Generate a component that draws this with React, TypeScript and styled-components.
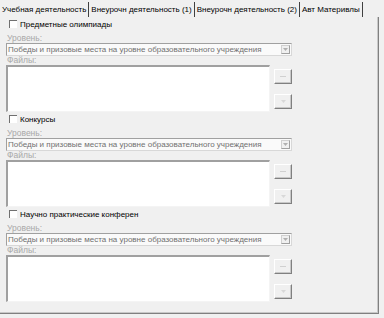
import React from 'react';
import styled, { createGlobalStyle } from 'styled-components';

const GlobalStyle = createGlobalStyle`
    html, body {
        margin: 0;
        padding: 0;
        background: #f0f0f0;
    }
`;

const Window = styled.div`
    width: 384px;
    height: 318px;
    background: #f0f0f0;
    font-family: 'Liberation Sans', Arial, sans-serif;
    color: #000;
    overflow: hidden;
`;

const TabBar = styled.div`
    display: flex;
    align-items: flex-end;
    height: 17px;
    padding-left: 2px;
`;

const Tab = styled.div<{ $active?: boolean }>`
    display: flex;
    align-items: center;
    height: 15px;
    padding: 0 2px 0 ${(p) => (p.$active ? 0 : 2)}px;
    border-right: 1px solid #404040;
    font-size: 8px;
    white-space: nowrap;
`;

const Panel = styled.div`
    width: 379px;
    height: 297px;
    border-right: 1px solid #808080;
    border-bottom: 1px solid #808080;
    box-shadow: inset -1px -1px 0 #c8c8c8;
    box-sizing: border-box;
    padding-left: 6px;
`;

const Section = styled.div`
    height: 95px;
    display: flex;
    flex-direction: column;
`;

const CheckRow = styled.label`
    display: flex;
    align-items: center;
    gap: 3px;
    height: 14px;
    padding-left: 3px;
    font-size: 8px;
`;

const CheckBox = styled.span`
    width: 7px;
    height: 7px;
    background: #fff;
    border-top: 1px solid #707070;
    border-left: 1px solid #707070;
`;

const FieldLabel = styled.div<{ $h: number }>`
    height: ${(p) => p.$h}px;
    display: flex;
    align-items: flex-end;
    font-size: 8.5px;
    line-height: 9px;
    color: #a8a8a8;
    padding-left: 1px;
`;

const Combo = styled.div`
    width: 286px;
    height: 13px;
    box-sizing: border-box;
    display: flex;
    align-items: center;
    background: #fafafa;
    border: 1px solid #a0a0a0;
    border-right-color: #d8d8d8;
    border-bottom-color: #d8d8d8;
`;

const ComboText = styled.span`
    flex: 1;
    padding-left: 1px;
    font-size: 8px;
    color: #707070;
    white-space: nowrap;
    overflow: hidden;
`;

const ComboArrow = styled.span`
    width: 9px;
    height: 9px;
    margin-right: 1px;
    display: flex;
    align-items: center;
    justify-content: center;
    border: 1px solid #d0d0d0;
    border-right-color: #a0a0a0;
    border-bottom-color: #a0a0a0;
    box-sizing: border-box;
    background: #f0f0f0;
`;

const FilesRow = styled.div`
    display: flex;
    gap: 4px;
`;

const FileList = styled.div`
    width: 264px;
    height: 47px;
    box-sizing: border-box;
    background: #fff;
    border-top: 2px solid #a0a0a0;
    border-left: 2px solid #a0a0a0;
    border-right: 1px solid #f4f4f4;
    border-bottom: 1px solid #f4f4f4;
`;

const ButtonColumn = styled.div`
    display: flex;
    flex-direction: column;
    gap: 10px;
    padding-top: 4px;
`;

const SmallButton = styled.div`
    width: 18px;
    height: 15px;
    box-sizing: border-box;
    display: flex;
    align-items: center;
    justify-content: center;
    background: #f0f0f0;
    border-top: 1px solid #ffffff;
    border-left: 1px solid #ffffff;
    border-right: 1px solid #808080;
    border-bottom: 1px solid #808080;
    box-shadow: inset -1px -1px 0 #c8c8c8;
`;

const tabs = ['Учебная деятельность', 'Внеурочн деятельность (1)', 'Внеурочн деятельность (2)', 'Авт Материвлы'];

const sections = ['Предметные олимпиады', 'Конкурсы', 'Научно практические конферен'];

function FileSection({ title }: { title: string }) {
    return (
        <Section>
            <CheckRow>
                <CheckBox />
                {title}
            </CheckRow>
            <FieldLabel $h={12}>Уровень:</FieldLabel>
            <Combo>
                <ComboText>Победы и призовые места на уровне образовательного учреждения</ComboText>
                <ComboArrow>
                    <svg width='5' height='3' viewBox='0 0 5 3'>
                        <path d='M0 0h5L2.5 3z' fill='#b0b0b0' />
                    </svg>
                </ComboArrow>
            </Combo>
            <FieldLabel $h={9}>Файлы:</FieldLabel>
            <FilesRow>
                <FileList />
                <ButtonColumn>
                    <SmallButton>
                        <svg width='6' height='2' viewBox='0 0 6 2'>
                            <path d='M0 0h6v1H0z' fill='#d0d0d0' />
                        </svg>
                    </SmallButton>
                    <SmallButton>
                        <svg width='5' height='4' viewBox='0 0 5 4'>
                            <path d='M0 0h5L2.5 3z' fill='#d8d8d8' />
                        </svg>
                    </SmallButton>
                </ButtonColumn>
            </FilesRow>
        </Section>
    );
}

export default function App() {
    return (
        <Window>
            <GlobalStyle />
            <TabBar>
                {tabs.map((t, i) => (
                    <Tab key={t} $active={i === 0}>
                        {t}
                    </Tab>
                ))}
            </TabBar>
            <Panel>
                {sections.map((s) => (
                    <FileSection key={s} title={s} />
                ))}
            </Panel>
        </Window>
    );
}
